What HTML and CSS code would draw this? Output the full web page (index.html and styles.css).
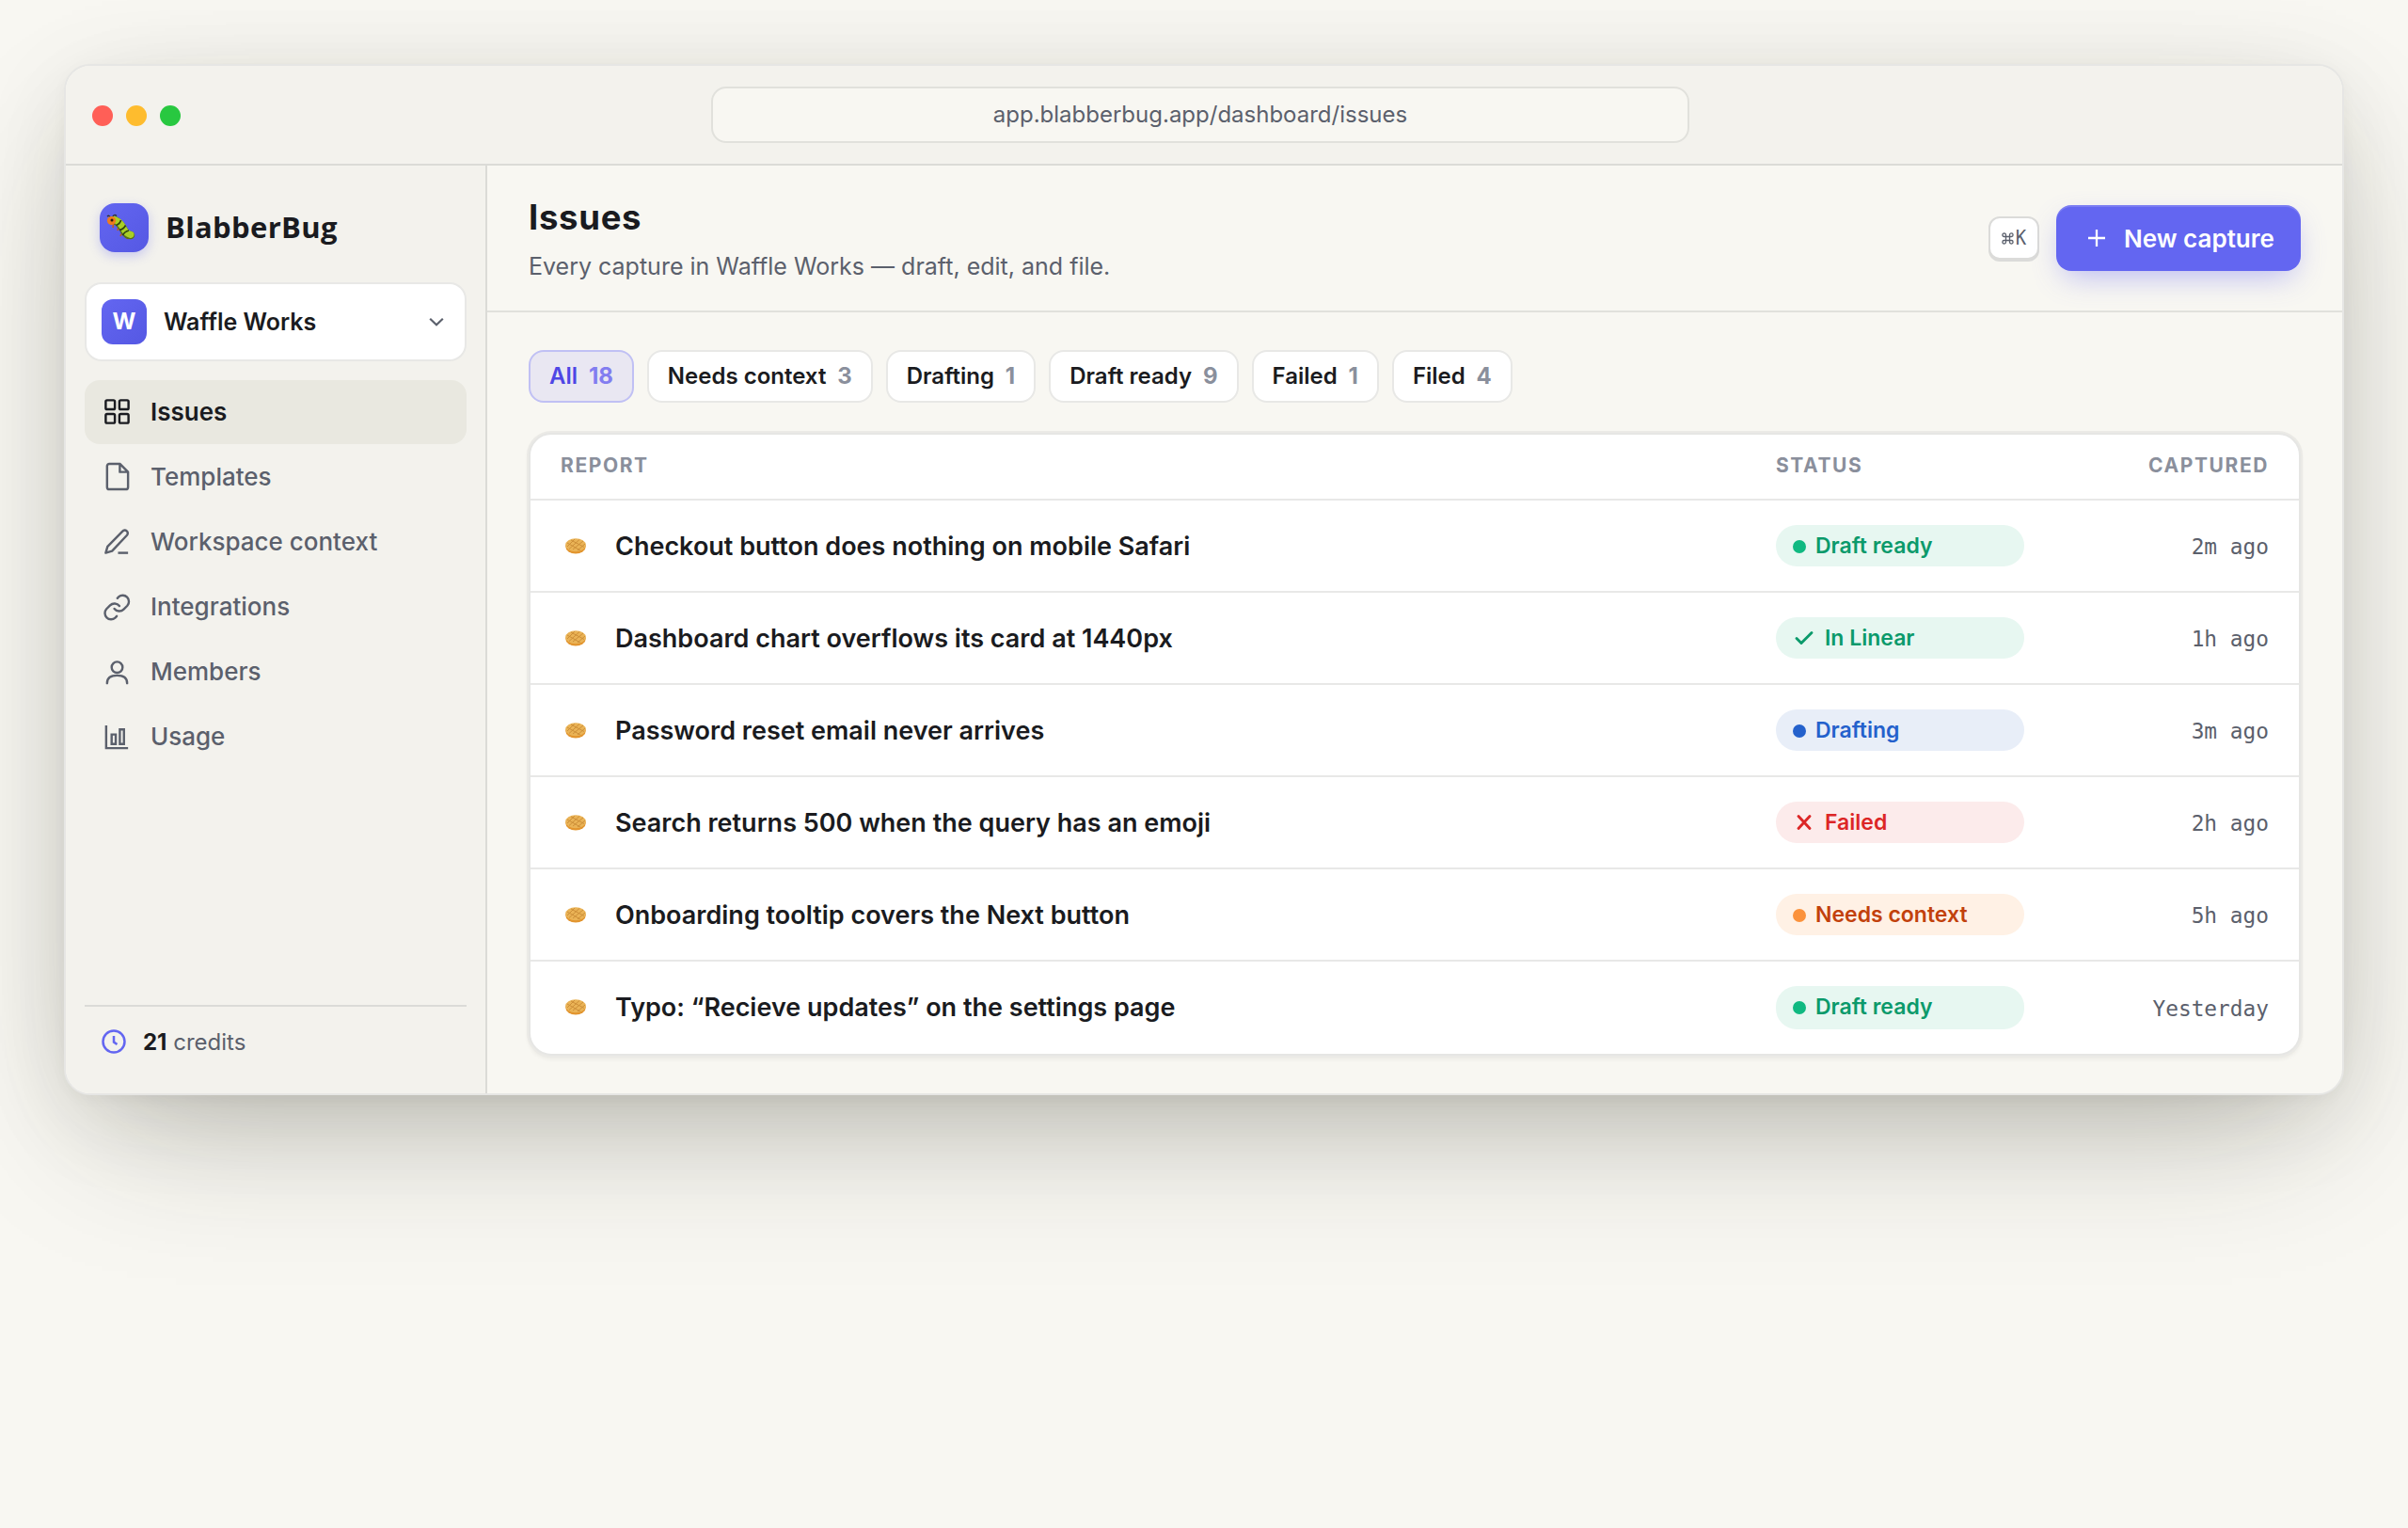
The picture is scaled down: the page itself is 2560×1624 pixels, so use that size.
FILE: index.html
```html
<!DOCTYPE html>
<html lang="en">
<head>
<meta charset="utf-8">
<title>Issues – BlabberBug</title>
<link rel="stylesheet" href="styles.css">
</head>
<body>
<svg class="sprite" aria-hidden="true">
  <symbol id="waffle" viewBox="0 0 24 18">
    <ellipse cx="12" cy="9.800" rx="10.800" ry="7.600" fill="#e2952f"/>
    <ellipse cx="12" cy="8.200" rx="10.800" ry="7" fill="#eab356"/>
    <path d="M3 10l8-8M5 12.500l11-10M9 13l11-9M14 14l8-7M3 6l14 8M7 3l14 7.500" stroke="#c98b35" stroke-width=".9" fill="none"/>
  </symbol>
</svg>
<main class="window">
  <header class="titlebar">
    <div class="lights"><i class="light red"></i><i class="light yellow"></i><i class="light green"></i></div>
    <div class="address">app.blabberbug.app/dashboard/issues</div>
  </header>
  <div class="body">
    <aside class="sidebar">
      <div class="brand">
        <span class="logo"><svg width="52" height="52" viewBox="0 0 52 52" fill="none">
          <path d="M15 20l-1 6M20 25l-1 4M24 31l-2 4M30 35l-1 3" stroke="#c35a1c" stroke-width="1.600"/>
          <path d="M11 14.500q-1-2-3-.5M14 14q1.500-2.500 4-.5" stroke="#2e3431" stroke-width="1.500"/>
          <path d="M16 18C22 21 24 25 26 29C28 33 31 34 33 34" stroke="#55701a" stroke-width="8.500" stroke-linecap="round"/>
          <path d="M16 17.500C22 20 24 24 26 28C28 32 31 33 33 33.500" stroke="#a9cf26" stroke-width="7" stroke-linecap="round"/>
          <path d="M22.500 18q-1 4-5 5.500M27.500 23.500q-2 4-6.500 5M31 29q-4.500 1-6.500 5" stroke="#2f4212" stroke-width="1.700"/>
          <circle cx="12.500" cy="18.500" r="4.600" fill="#ee7b1d"/><circle cx="13" cy="18" r="1.500" fill="#2a1c14"/>
        </svg></span>
        <span class="brand-name">BlabberBug</span>
      </div>
      <div class="switcher">
        <span class="avatar">W</span>
        <span class="team">Waffle Works</span>
        <svg class="chevron" width="24" height="24" viewBox="0 0 24 24"><path d="M5.200 8.800l6.800 6.500 6.800-6.500"/></svg>
      </div>
      <nav class="nav">
        <a class="item active"><svg viewBox="0 0 32 32"><rect x="3.500" y="3.500" width="10" height="10" rx="1.500"/><rect x="18.500" y="3.500" width="10" height="10" rx="1.500"/><rect x="3.500" y="18.500" width="10" height="10" rx="1.500"/><rect x="18.500" y="18.500" width="10" height="10" rx="1.500"/></svg>Issues</a>
        <a class="item"><svg viewBox="0 0 32 32"><path d="M19 2H7.500A2.500 2.500 0 0 0 5 4.500v23A2.500 2.500 0 0 0 7.500 30h18a2.500 2.500 0 0 0 2.500-2.500V11L19 2v9h9"/></svg>Templates</a>
        <a class="item"><svg viewBox="0 0 32 32"><path class="butt" d="M17 28.500h11"/><path d="M22 4.800a3.200 3.200 0 0 1 4.900 4.200L10.500 26.500l-7 2 2-7Z"/></svg>Workspace context</a>
        <a class="item"><svg viewBox="0 0 32 32"><path d="M13 17.500a6.800 6.800 0 0 0 10.200.7l4-4A6.800 6.800 0 0 0 17.600 4.600L16.300 6M18.500 14.500a6.800 6.800 0 0 0-10.200-.7l-4 4a6.800 6.800 0 0 0 9.600 9.600l1.700-1.700"/></svg>Integrations</a>
        <a class="item"><svg viewBox="0 0 32 32"><circle cx="16" cy="10.500" r="6"/><path d="M5 28c0-6 4-8.500 11-8.500S27 22 27 28"/></svg>Members</a>
        <a class="item"><svg viewBox="0 0 32 32"><path class="butt" d="M4 3v25h24M10 13h4.500v10.500H10ZM19 7.500h4.500v16H19Z"/></svg>Usage</a>
      </nav>
      <div class="credits">
        <svg width="26" height="26" viewBox="0 0 26 26"><circle cx="13" cy="13" r="11.500"/><path d="M13 7v6.500l3.500 2.500"/></svg>
        <span><b>21</b> credits</span>
      </div>
    </aside>
    <section class="content">
      <header class="page-head">
        <div class="heading">
          <h1>Issues</h1>
          <p>Every capture in Waffle Works — draft, edit, and file.</p>
        </div>
        <div class="actions">
          <kbd><svg width="13" height="13" viewBox="0 0 13 13"><path d="M4.500 4.500h4v4h-4zM4.500 4.500H2.700a1.800 1.800 0 1 1 1.800-1.800zM8.500 4.500V2.700a1.800 1.800 0 1 1 1.800 1.800zM8.500 8.500h1.800a1.800 1.800 0 1 1-1.800 1.800zM4.500 8.500v1.800a1.800 1.800 0 1 1-1.800-1.800z"/></svg><span>K</span></kbd>
          <button class="primary"><svg width="18" height="18" viewBox="0 0 18 18"><path d="M9 0v18M0 9h18"/></svg>New capture</button>
        </div>
      </header>
      <div class="panel">
        <div class="filters">
          <span class="chip on">All <em>18</em></span>
          <span class="chip">Needs context <em>3</em></span>
          <span class="chip">Drafting <em>1</em></span>
          <span class="chip">Draft ready <em>9</em></span>
          <span class="chip">Failed <em>1</em></span>
          <span class="chip">Filed <em>4</em></span>
        </div>
        <div class="table">
          <div class="row head"><span>Report</span><span>Status</span><span class="right">Captured</span></div>
          <div class="row"><span class="report"><svg class="thumb"><use href="#waffle"/></svg>Checkout button does nothing on mobile Safari</span><span class="pill green"><i></i>Draft ready</span><time>2m ago</time></div>
          <div class="row"><span class="report"><svg class="thumb"><use href="#waffle"/></svg>Dashboard chart overflows its card at 1440px</span><span class="pill green"><svg viewBox="0 0 24 24"><path d="M4 12.500l5 5L20 6.500"/></svg>In Linear</span><time>1h ago</time></div>
          <div class="row"><span class="report"><svg class="thumb"><use href="#waffle"/></svg>Password reset email never arrives</span><span class="pill blue"><i></i>Drafting</span><time>3m ago</time></div>
          <div class="row"><span class="report"><svg class="thumb"><use href="#waffle"/></svg>Search returns 500 when the query has an emoji</span><span class="pill red"><svg viewBox="0 0 24 24"><path d="M6 5.500l12 13M18 5.500L6 18.500"/></svg>Failed</span><time>2h ago</time></div>
          <div class="row"><span class="report"><svg class="thumb"><use href="#waffle"/></svg>Onboarding tooltip covers the Next button</span><span class="pill orange"><i></i>Needs context</span><time>5h ago</time></div>
          <div class="row last"><span class="report"><svg class="thumb"><use href="#waffle"/></svg>Typo: “Recieve updates” on the settings page</span><span class="pill green"><i></i>Draft ready</span><time>Yesterday</time></div>
        </div>
      </div>
    </section>
  </div>
</main>
</body>
</html>
```
FILE: styles.css
```css
* { box-sizing: border-box; }
body {
  margin: 0;
  padding: 68px;
  min-height: 1624px;
  overflow: hidden;
  background: #f8f7f2;
  color: #1a1b20;
  font-family: Inter, sans-serif;
  font-size: 24px;
}
svg { display: block; flex: none; fill: none; stroke: currentColor; overflow: visible; }
.sprite { position: absolute; width: 0; height: 0; }

.window {
  display: flex;
  flex-direction: column;
  height: 1096px;
  border: 2px solid #e6e6e4;
  border-radius: 28px;
  overflow: hidden;
  background: #f8f7f2;
  box-shadow: 0 4px 16px rgba(40, 38, 25, .03), 0 60px 160px -40px rgba(40, 38, 25, .28), 0 24px 100px -10px rgba(40, 38, 25, .13);
}
.titlebar {
  display: grid;
  grid-template-columns: 1fr 1040px 1fr;
  align-items: center;
  height: 106px;
  flex: none;
  padding: 0 28px;
  background: #f3f2ed;
  border-bottom: 2px solid #dbdbd7;
}
.lights { display: flex; gap: 14px; padding-top: 2px; }
.light { width: 22px; height: 22px; border-radius: 50%; }
.light.red { background: #ff5f57; }
.light.yellow { background: #febc2e; }
.light.green { background: #28c840; }
.address {
  height: 60px;
  margin-left: -4px;
  width: 1040px;
  border: 2px solid #e1e1dc;
  border-radius: 16px;
  background: #f8f7f2;
  color: #5b606c;
  line-height: 55px;
  text-align: center;
}
.body { display: flex; flex: 1; min-height: 0; }

.sidebar {
  display: flex;
  flex-direction: column;
  width: 448px;
  flex: none;
  padding: 40px 20px 0;
  background: #f3f2ed;
  border-right: 2px solid #dbdbd7;
}
.brand { display: flex; align-items: center; gap: 18px; padding-left: 16px; }
.logo {
  width: 52px;
  height: 52px;
  border-radius: 16px;
  background: linear-gradient(135deg, #6366f1, #5558e3);
  box-shadow: 0 4px 12px rgba(99, 102, 241, .3);
}
.logo svg { stroke: none; }
.brand-name { font: 700 31px/52px "Open Sans", sans-serif; letter-spacing: .35px; margin-top: -3px; }
.switcher {
  display: flex;
  align-items: center;
  height: 84px;
  margin-top: 32px;
  padding: 0 18px 0 16px;
  border: 2px solid #e8e8e6;
  border-radius: 18px;
  background: #fff;
}
.avatar {
  width: 48px;
  height: 48px;
  border-radius: 12px;
  background: linear-gradient(135deg, #6366f1, #5558e3);
  color: #fff;
  font-weight: 700;
  line-height: 47px;
  text-align: center;
}
.team { flex: 1; padding: 0 0 1px 18px; font-size: 25px; font-weight: 600; }
.chevron { stroke: #5b606c; stroke-width: 2.2; }
.nav { display: flex; flex-direction: column; gap: 1.200px; margin-top: 20px; }
.item {
  display: flex;
  align-items: center;
  gap: 20.500px;
  height: 68px;
  padding: 0 0 2px 18.500px;
  border-radius: 16px;
  color: #5b606c;
  font-size: 26px;
  font-weight: 500;
}
.item.active { background: #e9e8e0; color: #1a1b20; font-weight: 600; }
.item svg { width: 31px; height: 31px; margin-top: 1px; stroke-width: 2.500; stroke-linejoin: round; stroke-linecap: round; }
.item .butt { stroke-linecap: butt; stroke-linejoin: miter; }
.credits {
  display: flex;
  align-items: center;
  gap: 18px;
  height: 94px;
  margin-top: auto;
  padding: 0 0 18px 18px;
  border-top: 2px solid #dbdbd7;
  color: #5b606c;
}
.credits b { color: #1a1b20; font-weight: 700; }
.credits svg { stroke: #6366f1; stroke-width: 2.500; }

.content { flex: 1; display: flex; flex-direction: column; min-width: 0; }
.page-head {
  display: flex;
  justify-content: space-between;
  height: 156px;
  padding: 34px 44px 0;
  border-bottom: 2px solid #e1e1dc;
}
h1 { margin: 0; font-size: 36.500px; line-height: 42px; font-weight: 700; letter-spacing: .700px; }
.heading p { margin: 16px 0 0; color: #5b606c; font-size: 25px; line-height: 30px; }
.actions { display: flex; align-items: center; gap: 18px; height: 70px; margin-top: 8px; }
kbd {
  display: flex;
  align-items: center;
  justify-content: center;
  gap: 1px;
  width: 54px;
  height: 46px;
  border: 2px solid #dbdbd9;
  border-radius: 12px;
  background: #fff;
  box-shadow: 0 2px 0 #dbdbd9;
  color: #5b606c;
  font: 21px/1 "DejaVu Sans Mono", monospace;
}
kbd svg { stroke-width: 1.300; }
kbd span { transform: scaleX(.9); }
.primary {
  display: flex;
  align-items: center;
  gap: 20px;
  width: 260px;
  height: 70px;
  padding: 0 0 0 34px;
  border: 0;
  border-radius: 16px;
  background: #6366f1;
  color: #fff;
  font: 600 26px Inter, sans-serif;
  box-shadow: inset 0 2px 0 rgba(255, 255, 255, .15), 0 12px 32px -8px rgba(99, 102, 241, .45);
}
.primary svg { stroke-width: 2.300; }

.panel { padding: 40px 44px 0; }
.filters { display: flex; gap: 14px; }
.chip {
  height: 56px;
  padding: 0 20px;
  border: 2px solid #e8e8e6;
  border-radius: 16px;
  background: #fff;
  font-weight: 600;
  line-height: 51px;
  white-space: nowrap;
}
.chip em { margin-left: 5.800px; color: #8a8f9c; font-style: normal; font-weight: 700; }
.chip.on { border-color: #c0c0f4; background: #e9e7f2; color: #4f46e5; }
.chip.on em { color: #827df0; }

.table {
  margin-top: 32px;
  border: 2px solid #e6e6e4;
  border-radius: 24px;
  background: #fff;
  box-shadow: 0 0 0 2px #ebeae6, 0 3px 5px rgba(40, 38, 25, .08);
}
.row {
  display: grid;
  grid-template-columns: 1fr 264px 260px;
  align-items: center;
  height: 98px;
  padding: 0 32px;
  border-top: 2px solid #e8e8e7;
}
.row.head {
  height: 68px;
  padding-bottom: 4px;
  border-top: 0;
  color: #8a8f9c;
  font-size: 21px;
  font-weight: 700;
  letter-spacing: .076em;
  text-transform: uppercase;
}
.right { text-align: right; }
.report { display: flex; align-items: center; gap: 30px; padding-left: 4px; font-size: 27px; font-weight: 600; }
.thumb { width: 24px; height: 18px; stroke: none; }
.pill {
  display: flex;
  align-items: center;
  gap: 10px;
  height: 44px;
  padding: 0 0 1px 18px;
  border-radius: 22px;
  font-size: 23px;
  font-weight: 600;
}
.pill i { width: 14px; height: 14px; margin-top: 2px; border-radius: 50%; background: currentColor; }
.pill svg { width: 24px; height: 24px; stroke-width: 2.900; stroke-linecap: round; stroke-linejoin: round; }
.pill.green { background: #e7f7f1; color: #0b9a6b; }
.pill.green i { background: #10b981; }
.pill.blue { background: #e8eef8; color: #2461cc; }
.pill.red { background: #fcebeb; color: #dc2626; }
.pill.orange { background: #fff1e5; color: #c2410c; }
.pill.orange i { background: #fb923c; }
time { padding-top: 2px; color: #5b606c; font: 22.800px/30px "DejaVu Sans Mono", monospace; text-align: right; }
.row.last { height: 100px; }
.last .pill { height: 46px; padding-bottom: 3px; }
.last .report { padding-bottom: 2px; }
```
